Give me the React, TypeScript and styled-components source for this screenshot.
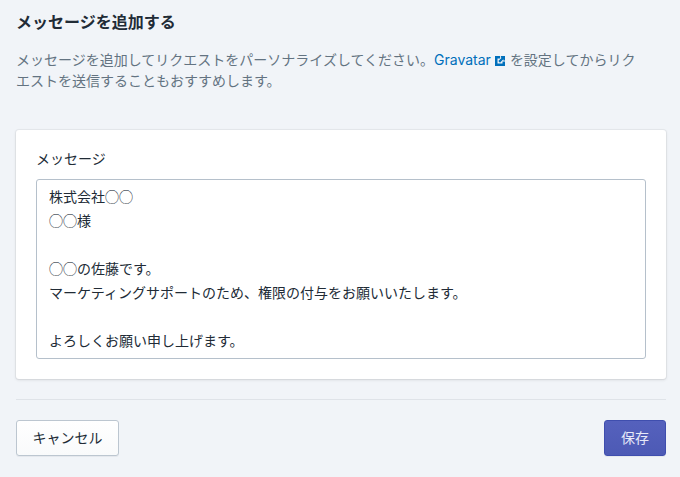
import React from "react";
import styled, { createGlobalStyle } from "styled-components";

const FONT = `Inter, "Noto Sans CJK JP", "Liberation Sans", sans-serif`;
const JP = `"Noto Sans CJK JP", "Liberation Sans", sans-serif`;

const Global = createGlobalStyle`
  html, body { margin: 0; padding: 0; background: #f1f4f8; }
  body { font-family: ${JP}; color: #212b36; }
  * { box-sizing: border-box; }
`;

const Page = styled.div`
  width: 680px;
  height: 477px;
  padding: 9px 14px 0 16px;
  overflow: hidden;
`;
const Title = styled.h1`
  margin: 0;
  font-size: 16px;
  line-height: 24px;
  font-weight: 700;
  color: #212b36;
`;
const Description = styled.p`
  margin: 16px 0 0;
  width: 630px;
  font-size: 14px;
  line-height: 20px;
  color: #637381;
`;
const Link = styled.a`
  color: #006fbb;
  font-family: ${FONT};
  text-decoration: none;
`;
const LinkIcon = styled.svg`
  width: 10px;
  height: 10px;
  margin: 0 5px 0 4px;
  vertical-align: -1px;
  fill: #006fbb;
`;
const Card = styled.section`
  margin-top: 40px;
  height: 249px;
  padding: 18px 20px 20px;
  background: #fff;
  border-radius: 3px;
  box-shadow: 0 0 0 1px rgba(63, 63, 68, 0.05), 0 1px 3px 0 rgba(63, 63, 68, 0.15);
`;
const Label = styled.label`
  display: block;
  font-size: 14px;
  line-height: 20px;
  color: #212b36;
`;
const MessageBox = styled.textarea`
  display: block;
  width: 610px;
  height: 180px;
  margin-top: 11px;
  padding: 4px 12px;
  border: 1px solid #b5c0cb;
  border-radius: 3px;
  background: #fff;
  color: #212b36;
  font-family: ${JP};
  font-size: 14px;
  line-height: 24px;
  resize: none;
  overflow: hidden;
  outline: none;
`;
const Divider = styled.hr`
  margin: 20px 0 0;
  border: 0;
  border-top: 1px solid #dfe3e8;
`;
const Actions = styled.div`
  display: flex;
  justify-content: space-between;
  margin-top: 20px;
`;
const Button = styled.button<{ $primary?: boolean }>`
  height: 36px;
  width: ${(p) => (p.$primary ? "62px" : "103px")};
  padding: 0 0 2px;
  border-radius: 3px;
  font-family: ${JP};
  font-size: 14px;
  line-height: 20px;
  border: 1px solid ${(p) => (p.$primary ? "#3f4eae" : "#bcc6d0")};
  background: ${(p) =>
    p.$primary ? "linear-gradient(180deg, #5561bd, #4d5ab5)" : "linear-gradient(180deg, #fff, #f9fafb)"};
  color: ${(p) => (p.$primary ? "#e6e9f8" : "#212b36")};
  box-shadow: 0 1px 0 0 rgba(22, 29, 37, 0.05);
`;

const message = `株式会社◯◯
◯◯様

◯◯の佐藤です。
マーケティングサポートのため、権限の付与をお願いいたします。

よろしくお願い申し上げます。`;

export default function App() {
  return (
    <Page>
      <Global />
      <Title>メッセージを追加する</Title>
      <Description>
        メッセージを追加してリクエストをパーソナライズしてください。
        <Link href="#">
          Gravatar
          <LinkIcon viewBox="0 0 12 12" aria-hidden="true">
            <path d="M0 0h6v3H3v6h6V6.5h3V12H0V0z" />
            <path d="M7 0h5v5.5h-2V4L6 8 4 6l4-4H7V0z" />
          </LinkIcon>
        </Link>
        を設定してからリクエストを送信することもおすすめします。
      </Description>
      <Card>
        <Label htmlFor="msg">メッセージ</Label>
        <MessageBox id="msg" readOnly value={message} />
      </Card>
      <Divider />
      <Actions>
        <Button>キャンセル</Button>
        <Button $primary>保存</Button>
      </Actions>
    </Page>
  );
}
